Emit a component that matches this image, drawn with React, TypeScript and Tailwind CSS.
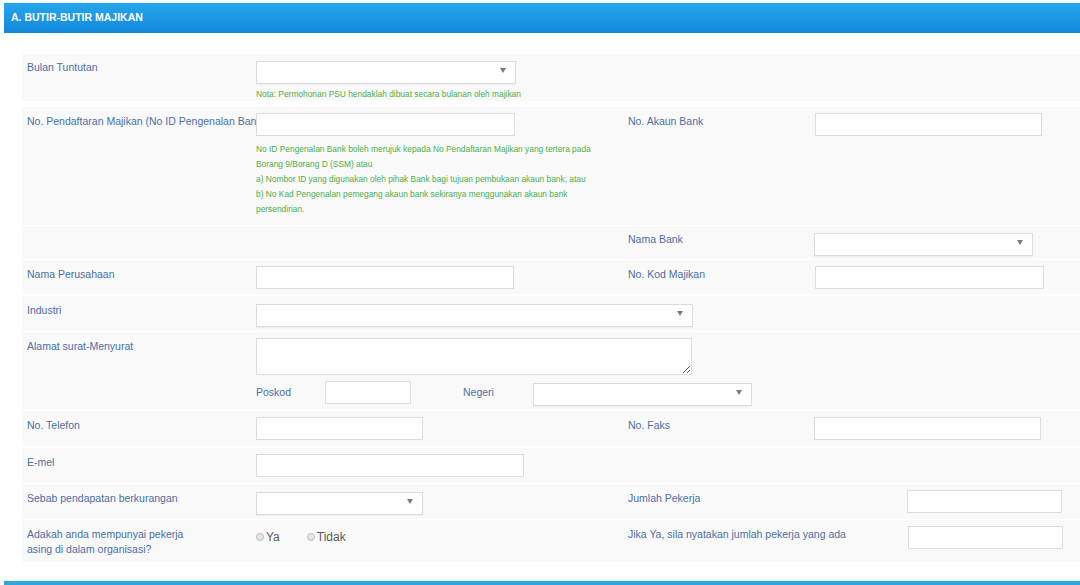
import type { ReactNode } from 'react';

const font = { fontFamily: '"Liberation Sans", Arial, Helvetica, sans-serif' };

function TextBox({ width, className = '' }: { width: string; className?: string }) {
  return (
    <input
      type="text"
      className={`${width} h-[23px] shrink-0 border border-[#dcdcdc] bg-white px-2 text-[11px] outline-none ${className}`}
    />
  );
}

function SelectBox({ width }: { width: string }) {
  return (
    <div className={`relative ${width} h-[23px] shrink-0`}>
      <select className="h-full w-full appearance-none border border-[#dcdcdc] bg-white px-2 text-[11px] shadow-[0_1px_1px_rgba(0,0,0,0.04)] outline-none" />
      <span className="pointer-events-none absolute right-[10px] top-[9px] h-0 w-0 border-x-[3px] border-t-[5px] border-x-transparent border-t-[#7a7a7a]" />
    </div>
  );
}

function Label({ children, className = '' }: { children: ReactNode; className?: string }) {
  return (
    <div className={`shrink-0 overflow-hidden whitespace-nowrap text-[10.5px] leading-[15px] text-[#4b6ea6] ${className}`}>
      {children}
    </div>
  );
}

function Row({ children, className = '' }: { children: ReactNode; className?: string }) {
  return <div className={`flex bg-[#f9f9f9] pt-[5px] ${className}`}>{children}</div>;
}

// left half: label column then control
function Left({ label, children }: { label: ReactNode; children?: ReactNode }) {
  return (
    <div className="flex w-[590px] shrink-0 items-start">
      <Label className="mt-[1px] w-[234px] pl-[5px]">{label}</Label>
      <div className="flex flex-col">{children}</div>
    </div>
  );
}

function Right({ label, labelWidth = 'w-[203px]', children }: { label: ReactNode; labelWidth?: string; children?: ReactNode }) {
  return (
    <div className="flex items-start">
      <Label className={`mt-[1px] ${labelWidth} pl-[16px]`}>{label}</Label>
      {children}
    </div>
  );
}

function Radio({ label }: { label: string }) {
  return (
    <label className="flex items-center gap-[2px] text-[12px] text-[#5a5a5a]">
      <span className="h-[8px] w-[8px] rounded-full border border-[#bdbdbd] bg-[#e6e6e6]" />
      {label}
    </label>
  );
}

export default function App() {
  return (
    <div className="min-h-[585px] bg-white pl-[4px] pt-[3px]" style={font}>
      <div className="flex h-[30px] items-center bg-gradient-to-b from-[#25a6ee] to-[#1189d9] pl-[7px] text-[10.5px] font-bold text-white">
        A. BUTIR-BUTIR MAJIKAN
      </div>

      <div className="flex flex-col gap-[1px] pl-[18px] pt-[21px]">
        <Row className="h-[47px]">
          <Left label="Bulan Tuntutan">
            <SelectBox width="w-[260px]" />
            <p className="mt-[6px] whitespace-nowrap text-[8.4px] leading-[12px] text-[#4cae4c]">
              Nota: Permohonan PSU hendaklah dibuat secara bulanan oleh majikan
            </p>
          </Left>
        </Row>

        <Row className="mt-[5px] h-[118px] pt-[6px]">
          <div className="flex w-[590px] shrink-0 items-start">
            <Label className="mt-[1px] w-[234px] pl-[5px]">No. Pendaftaran Majikan (No ID Pengenalan Bank)</Label>
            <div className="flex flex-col">
              <TextBox width="w-[259px]" />
              <div className="mt-[6px] whitespace-nowrap text-[8.4px] leading-[15px] text-[#4cae4c]">
                <p>No ID Pengenalan Bank boleh merujuk kepada No Pendaftaran Majikan yang tertera pada</p>
                <p>Borang 9/Borang D (SSM) atau</p>
                <p>a) Nombor ID yang digunakan oleh pihak Bank bagi tujuan pembukaan akaun bank; atau</p>
                <p>b) No Kad Pengenalan pemegang akaun bank sekiranya menggunakan akaun bank</p>
                <p>persendirian.</p>
              </div>
            </div>
          </div>
          <Right label="No. Akaun Bank">
            <TextBox width="w-[227px]" />
          </Right>
        </Row>

        <Row className="h-[33px] pt-[4px]">
          <div className="w-[590px] shrink-0" />
          <Right label="Nama Bank" labelWidth="w-[202px]">
            <SelectBox width="w-[219px]" />
          </Right>
        </Row>

        <Row className="h-[34px] pt-[6px]">
          <Left label="Nama Perusahaan">
            <TextBox width="w-[258px]" />
          </Left>
          <Right label="No. Kod Majikan">
            <TextBox width="w-[229px]" />
          </Right>
        </Row>

        <Row className="mt-[1px] h-[35px] pt-[6px]">
          <Left label="Industri">
            <SelectBox width="w-[437px]" />
          </Left>
        </Row>

        <Row className="h-[78px] pt-[6px]">
          <Left label="Alamat surat-Menyurat">
            <textarea className="h-[37px] w-[436px] resize-y border border-[#dcdcdc] bg-white outline-none" />
            <div className="mt-[6px] flex items-center">
              <Label className="w-[69px] leading-[23px]">Poskod</Label>
              <TextBox width="w-[86px]" />
              <Label className="box-content w-[70px] pl-[52px] leading-[23px]">Negeri</Label>
              <SelectBox width="w-[219px]" />
            </div>
          </Left>
        </Row>

        <Row className="h-[35px] pt-[6px]">
          <Left label="No. Telefon">
            <TextBox width="w-[167px]" />
          </Left>
          <Right label="No. Faks" labelWidth="w-[202px]">
            <TextBox width="w-[227px]" />
          </Right>
        </Row>

        <Row className="mt-[1px] h-[35px] pt-[6px]">
          <Left label="E-mel">
            <TextBox width="w-[268px]" />
          </Left>
        </Row>

        <Row className="h-[35px] pt-[6px]">
          <Left label="Sebab pendapatan berkurangan">
            <SelectBox width="w-[167px]" />
          </Left>
          <Right label="Jumlah Pekerja" labelWidth="w-[295px]">
            <TextBox width="w-[155px]" />
          </Right>
        </Row>

        <Row className="h-[42px] pt-[6px]">
          <Left
            label={
              <>
                Adakah anda mempunyai pekerja
                <br />
                asing di dalam organisasi?
              </>
            }
          >
            <div className="mt-[2px] flex items-center gap-[27px]">
              <Radio label="Ya" />
              <Radio label="Tidak" />
            </div>
          </Left>
          <Right label="Jika Ya, sila nyatakan jumlah pekerja yang ada" labelWidth="w-[296px]">
            <TextBox width="w-[155px]" />
          </Right>
        </Row>
      </div>

      <div className="mt-[19px] h-[4px] bg-[#2aa8e2]" />
    </div>
  );
}
